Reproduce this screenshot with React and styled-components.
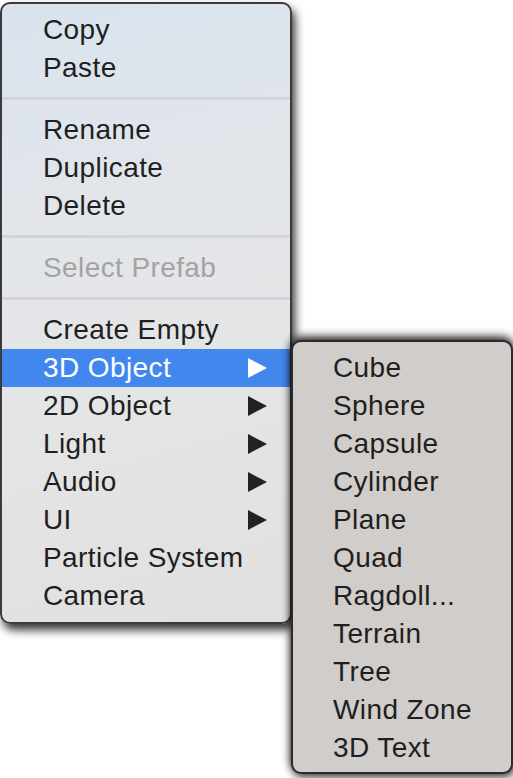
import React from 'react';
import styled, { createGlobalStyle } from 'styled-components';

const GlobalStyle = createGlobalStyle`
  html, body {
    margin: 0;
    padding: 0;
    background: #ffffff;
  }
  body {
    font-family: "Liberation Sans", Arial, sans-serif;
  }
`;

const Page = styled.div`
  width: 513px;
  height: 778px;
  overflow: hidden;
  padding-top: 2px;
  box-sizing: border-box;
`;

const Menu = styled.div`
  position: relative;
  width: 292px;
  box-sizing: border-box;
  border: 2px solid #3a3a3c;
  border-radius: 10px;
  padding: 7px 0;
  background: linear-gradient(165deg, #d9e3ee 0%, #e3e6ea 35%, #e4e4e4 70%, #e0e0e0 100%);
  box-shadow: 3px 6px 10px rgba(0, 0, 0, 0.8);
`;

const SubMenu = styled.div`
  position: absolute;
  top: -9px;
  left: 289px;
  width: 222px;
  box-sizing: border-box;
  border: 2px solid #2c2a2a;
  border-radius: 10px;
  padding: 7px 0 5px;
  background: #d1cdca;
  box-shadow: 0 -3px 10px rgba(0, 0, 0, 0.9), 2px 4px 8px rgba(0, 0, 0, 0.6);
  z-index: 2;
`;

const Row = styled.div`
  position: relative;
  display: flex;
  align-items: center;
  justify-content: space-between;
  height: 38px;
  padding: 0 23px 0 41px;
  font-size: 28px;
  line-height: 38px;
  letter-spacing: 0.4px;
  color: ${p => (p.$disabled ? '#a3a3a3' : p.$active ? '#ffffff' : '#1f1f1f')};
  background: ${p => (p.$active ? '#4287ee' : 'transparent')};
  white-space: nowrap;
`;

const SubRow = styled(Row)`
  padding-left: 40px;
`;

const Separator = styled.div`
  height: 3px;
  margin: 10px 0 11px;
  background: #d2d4d7;
`;

const Arrow = styled.svg`
  width: 19px;
  height: 20px;
  display: block;
  fill: ${p => (p.$active ? '#ffffff' : '#222222')};
`;

const Caret = ({ active }) => (
  <Arrow $active={active} viewBox="0 0 19 20">
    <polygon points="0,0 19,10 0,20" />
  </Arrow>
);

const groups = [
  [{ label: 'Copy' }, { label: 'Paste' }],
  [{ label: 'Rename' }, { label: 'Duplicate' }, { label: 'Delete' }],
  [{ label: 'Select Prefab', disabled: true }],
  [
    { label: 'Create Empty' },
    { label: '3D Object', sub: true, active: true },
    { label: '2D Object', sub: true },
    { label: 'Light', sub: true },
    { label: 'Audio', sub: true },
    { label: 'UI', sub: true },
    { label: 'Particle System' },
    { label: 'Camera' },
  ],
];

const objects = [
  'Cube',
  'Sphere',
  'Capsule',
  'Cylinder',
  'Plane',
  'Quad',
  'Ragdoll...',
  'Terrain',
  'Tree',
  'Wind Zone',
  '3D Text',
];

export default function App() {
  return (
    <Page>
      <GlobalStyle />
      <Menu>
        {groups.map((items, gi) => (
          <React.Fragment key={gi}>
            {gi > 0 && <Separator />}
            {items.map(item => (
              <Row key={item.label} $active={item.active} $disabled={item.disabled}>
                <span>{item.label}</span>
                {item.sub && <Caret active={item.active} />}
                {item.active && (
                  <SubMenu>
                    {objects.map(name => (
                      <SubRow key={name}>
                        <span>{name}</span>
                      </SubRow>
                    ))}
                  </SubMenu>
                )}
              </Row>
            ))}
          </React.Fragment>
        ))}
      </Menu>
    </Page>
  );
}
